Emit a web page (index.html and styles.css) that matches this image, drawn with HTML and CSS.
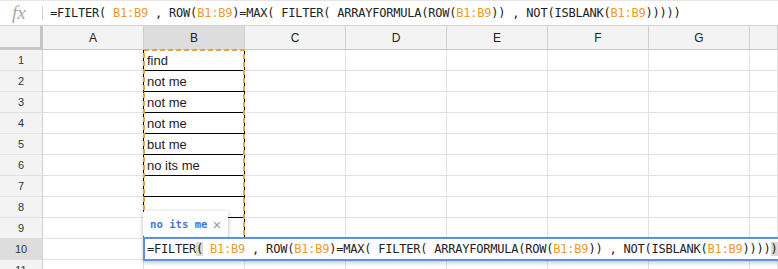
FILE: index.html
```html
<!DOCTYPE html>
<html lang="en">
<head>
    <meta charset="UTF-8">
    <title>Sheet - FILTER formula</title>
    <link rel="stylesheet" href="styles.css">
</head>
<body>
    <div class="formula-bar">
        <span class="fx">fx</span>
        <span class="fx-sep"></span>
        <div class="formula">=FILTER( <span class="ref">B1:B9</span> , ROW(<span class="ref">B1:B9</span>)=MAX( FILTER( ARRAYFORMULA(ROW(<span class="ref">B1:B9</span>)) , NOT(ISBLANK(<span class="ref">B1:B9</span>)))))</div>
    </div>

    <div class="sheet">
        <div class="grid">
            <!-- header row -->
            <div class="corner"></div>
            <div class="ch">A</div>
            <div class="ch sel">B</div>
            <div class="ch">C</div>
            <div class="ch">D</div>
            <div class="ch">E</div>
            <div class="ch">F</div>
            <div class="ch">G</div>
            <div class="ch"></div>

            <div class="rh">1</div><div class="c a-edge"></div><div class="c b-box">find</div><div class="c"></div><div class="c"></div><div class="c"></div><div class="c"></div><div class="c"></div><div class="c"></div>
            <div class="rh">2</div><div class="c a-edge"></div><div class="c b-box">not me</div><div class="c"></div><div class="c"></div><div class="c"></div><div class="c"></div><div class="c"></div><div class="c"></div>
            <div class="rh">3</div><div class="c a-edge"></div><div class="c b-box">not me</div><div class="c"></div><div class="c"></div><div class="c"></div><div class="c"></div><div class="c"></div><div class="c"></div>
            <div class="rh">4</div><div class="c a-edge"></div><div class="c b-box">not me</div><div class="c"></div><div class="c"></div><div class="c"></div><div class="c"></div><div class="c"></div><div class="c"></div>
            <div class="rh">5</div><div class="c a-edge"></div><div class="c b-box">but me</div><div class="c"></div><div class="c"></div><div class="c"></div><div class="c"></div><div class="c"></div><div class="c"></div>
            <div class="rh">6</div><div class="c a-edge"></div><div class="c b-box">no its me</div><div class="c"></div><div class="c"></div><div class="c"></div><div class="c"></div><div class="c"></div><div class="c"></div>
            <div class="rh">7</div><div class="c a-edge"></div><div class="c b-box"></div><div class="c"></div><div class="c"></div><div class="c"></div><div class="c"></div><div class="c"></div><div class="c"></div>
            <div class="rh">8</div><div class="c a-edge"></div><div class="c b-box"></div><div class="c"></div><div class="c"></div><div class="c"></div><div class="c"></div><div class="c"></div><div class="c"></div>
            <div class="rh">9</div><div class="c a-edge"></div><div class="c b-side"></div><div class="c"></div><div class="c"></div><div class="c"></div><div class="c"></div><div class="c"></div><div class="c"></div>
            <div class="rh sel">10</div><div class="c"></div><div class="c"></div><div class="c"></div><div class="c"></div><div class="c"></div><div class="c"></div><div class="c"></div><div class="c"></div>
            <div class="rh">11</div><div class="c"></div><div class="c"></div><div class="c"></div><div class="c"></div><div class="c"></div><div class="c"></div><div class="c"></div><div class="c"></div>
        </div>

        <!-- range highlight B1:B9 -->
        <svg class="range" width="102" height="190" viewBox="0 0 102 190">
            <rect x="1" y="1" width="100" height="188" fill="none" stroke="#e8a33d" stroke-width="2" stroke-dasharray="5 3"/>
        </svg>

        <!-- value preview tooltip -->
        <div class="preview">
            <span class="preview-val">no its me</span>
            <span class="preview-close">&times;</span>
            <span class="preview-tip"></span>
        </div>

        <!-- in-cell editor -->
        <div class="editor">=FILTER<span class="hl">(</span> <span class="ref">B1:B9</span> , ROW(<span class="ref">B1:B9</span>)=MAX( FILTER( ARRAYFORMULA(ROW(<span class="ref">B1:B9</span>)) , NOT(ISBLANK(<span class="ref">B1:B9</span>))))<span class="hl">)</span><span class="caret"></span></div>
    </div>
</body>
</html>
```

FILE: styles.css
```css
* {
    margin: 0;
    padding: 0;
    box-sizing: border-box;
}

body {
    font-family: 'Liberation Sans', Arial, sans-serif;
    background-color: #ffffff;
    color: #222222;
    width: 778px;
    height: 269px;
    overflow: hidden;
}

/* formula bar */
.formula-bar {
    height: 26px;
    display: flex;
    align-items: center;
    border-top: 1px solid #e6e6e6;
    border-bottom: 1px solid #d4d4d4;
    overflow: hidden;
}

.fx {
    width: 42px;
    padding-left: 12px;
    font-family: 'Liberation Serif', serif;
    font-style: italic;
    font-size: 19px;
    color: #a8a8a8;
    line-height: 20px;
}

.fx-sep {
    width: 1px;
    height: 14px;
    background-color: #d0d0d0;
}

.formula,
.editor {
    font-family: 'DejaVu Sans Mono', monospace;
    font-size: 12px;
    letter-spacing: -0.22px;
    white-space: pre;
    color: #222222;
}

.formula {
    padding-left: 7px;
}

.ref {
    color: #eb9b30;
}

/* grid */
.sheet {
    position: relative;
}

.grid {
    display: grid;
    grid-template-columns: 43px repeat(7, 101px) 1fr;
    grid-template-rows: 24px repeat(11, 21px);
}

.corner {
    background-color: #f3f3f3;
    border-right: 3px solid #c6c6c6;
    border-bottom: 3px solid #c6c6c6;
}

.ch {
    background-color: #f3f3f3;
    border-right: 1px solid #cfcfcf;
    border-bottom: 1px solid #c6c6c6;
    font-size: 12px;
    color: #222222;
    display: flex;
    align-items: center;
    justify-content: center;
}

.rh {
    background-color: #f3f3f3;
    border-right: 1px solid #cfcfcf;
    border-bottom: 1px solid #e0e0e0;
    font-size: 11px;
    color: #333333;
    display: flex;
    align-items: center;
    justify-content: center;
}

.sel {
    background-color: #dddddd;
}

.c {
    border-right: 1px solid #e2e2e2;
    border-bottom: 1px solid #e2e2e2;
    font-size: 13px;
    color: #1f1a2a;
    padding-left: 3px;
    display: flex;
    align-items: center;
    white-space: nowrap;
}

.a-edge {
    border-right-color: #000000;
}

.b-box {
    border-right-color: #000000;
    border-bottom-color: #000000;
}

.b-side {
    border-right-color: #000000;
}

/* overlays */
.range {
    position: absolute;
    left: 143px;
    top: 23px;
}

.preview {
    position: absolute;
    left: 143px;
    top: 185px;
    width: 85px;
    height: 26px;
    background-color: #ffffff;
    border-radius: 2px;
    box-shadow: 0 1px 4px rgba(0, 0, 0, 0.3);
    display: flex;
    align-items: center;
    padding-left: 7px;
    gap: 5px;
}

.preview-val {
    font-family: 'DejaVu Sans Mono', monospace;
    font-weight: bold;
    font-size: 10.6px;
    color: #3f7ad6;
}

.preview-close {
    font-size: 15px;
    color: #9a9a9a;
    line-height: 1;
}

.preview-tip {
    position: absolute;
    left: 5px;
    bottom: -5px;
    width: 0;
    height: 0;
    border-left: 5px solid transparent;
    border-right: 5px solid transparent;
    border-top: 5px solid #ffffff;
}

.editor {
    position: absolute;
    left: 143px;
    top: 211px;
    width: 640px;
    height: 24px;
    background-color: #ffffff;
    border: 2px solid #5d8fe3;
    box-shadow: 0 2px 4px rgba(0, 0, 0, 0.2);
    padding-left: 2px;
    line-height: 20px;
}

.hl {
    background-color: #d9d9d9;
}

.caret {
    display: inline-block;
    width: 1px;
    height: 15px;
    vertical-align: -3px;
    background-color: #000000;
}
```
